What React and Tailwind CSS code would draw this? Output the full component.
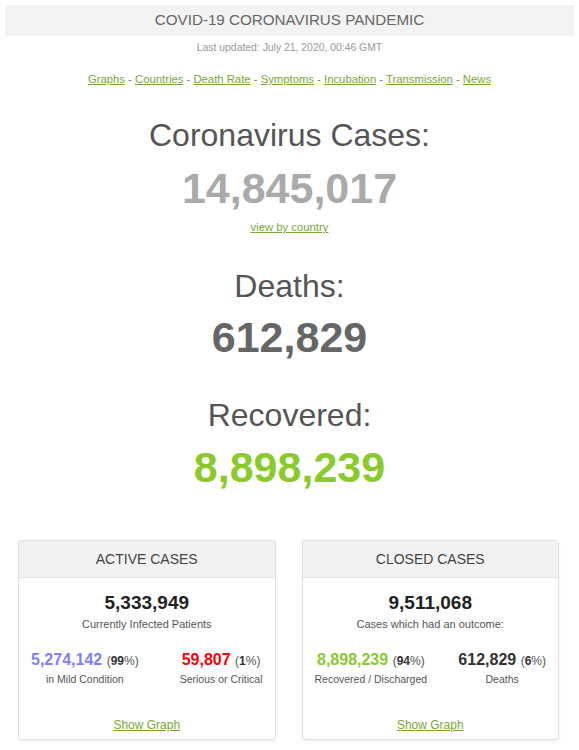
import React from "react";

const font = { fontFamily: '"Liberation Sans", Arial, Helvetica, sans-serif' };

const links = ["Graphs", "Countries", "Death Rate", "Symptoms", "Incubation", "Transmission", "News"];

const Stat = ({ value, pct, label, color }) => (
  <div className="text-center">
    <div className="leading-[20px] whitespace-nowrap">
      <span className={`text-[16px] font-bold ${color}`}>{value}</span>{" "}
      <span className="text-[12px] text-[#555]">
        (<b className="text-[#333]">{pct}</b>%)
      </span>
    </div>
    <div className="mt-[1px] text-[10.5px] leading-[14px] text-[#555] whitespace-nowrap">{label}</div>
  </div>
);

const CaseCard = ({ title, total, caption, left, right }) => (
  <div className="rounded-[3px] border border-[#e0e0e0] shadow-[0_1px_2px_rgba(0,0,0,0.08)] overflow-hidden">
    <div className="h-[37px] flex items-center justify-center bg-[#f2f2f2] border-b border-[#e3e3e3] text-[14px] text-[#444] uppercase">
      {title}
    </div>
    <div className="pt-[14px] pb-[6px] text-center">
      <div className="text-[19px] leading-[22px] font-bold text-[#222]">{total}</div>
      <div className="mt-[3px] text-[11px] leading-[14px] text-[#555]">{caption}</div>
      <div className="mt-[19px] px-[12px] flex justify-between">
        <Stat {...left} />
        <Stat {...right} />
      </div>
      <div className="mt-[31px] text-[12px] leading-[16px]">
        <a href="#" className="text-[#79a735] underline">Show Graph</a>
      </div>
    </div>
  </div>
);

const App = () => {
  return (
    <div className="bg-white min-h-screen pb-[10px]" style={font}>
      <div className="mx-[5px] pt-[5px]">
        <div className="h-[31px] flex items-center justify-center bg-[#f3f3f3] text-[15.2px] text-[#666] uppercase">
          Covid-19 Coronavirus Pandemic
        </div>
      </div>
      <div className="mt-[5px] text-center text-[10.4px] leading-[14px] text-[#999]">
        Last updated: July 21, 2020, 00:46 GMT
      </div>
      <div className="mt-[17px] text-center text-[11.3px] leading-[14px] text-[#777]">
        {links.map((l, i) => (
          <span key={l}>
            <a href="#" className="text-[#79a735] underline">{l}</a>
            {i < links.length - 1 && " - "}
          </span>
        ))}
      </div>

      <div className="text-center">
        <h1 className="mt-[31px] text-[32px] leading-[36px] text-[#555]">Coronavirus Cases:</h1>
        <div className="mt-[11px] text-[43px] leading-[48px] font-bold text-[#aaa]">14,845,017</div>
        <div className="mt-[8px] text-[11.3px] leading-[14px]">
          <a href="#" className="text-[#79a735] underline">view by country</a>
        </div>

        <h1 className="mt-[34px] text-[32px] leading-[36px] text-[#555]">Deaths:</h1>
        <div className="mt-[9px] text-[43px] leading-[48px] font-bold text-[#666]">612,829</div>

        <h1 className="mt-[36px] text-[32px] leading-[36px] text-[#555]">Recovered:</h1>
        <div className="mt-[10px] text-[43px] leading-[48px] font-bold text-[#8aca2b]">8,898,239</div>
      </div>

      <div className="mt-[49px] pl-[18px] pr-[20px] grid grid-cols-2 gap-[26px]">
        <CaseCard
          title="Active Cases"
          total="5,333,949"
          caption="Currently Infected Patients"
          left={{ value: "5,274,142", pct: "99", label: "in Mild Condition", color: "text-[#8080ff]" }}
          right={{ value: "59,807", pct: "1", label: "Serious or Critical", color: "text-[#ff0000]" }}
        />
        <CaseCard
          title="Closed Cases"
          total="9,511,068"
          caption="Cases which had an outcome:"
          left={{ value: "8,898,239", pct: "94", label: "Recovered / Discharged", color: "text-[#8aca2b]" }}
          right={{ value: "612,829", pct: "6", label: "Deaths", color: "text-[#333]" }}
        />
      </div>
    </div>
  );
};

export default App;
